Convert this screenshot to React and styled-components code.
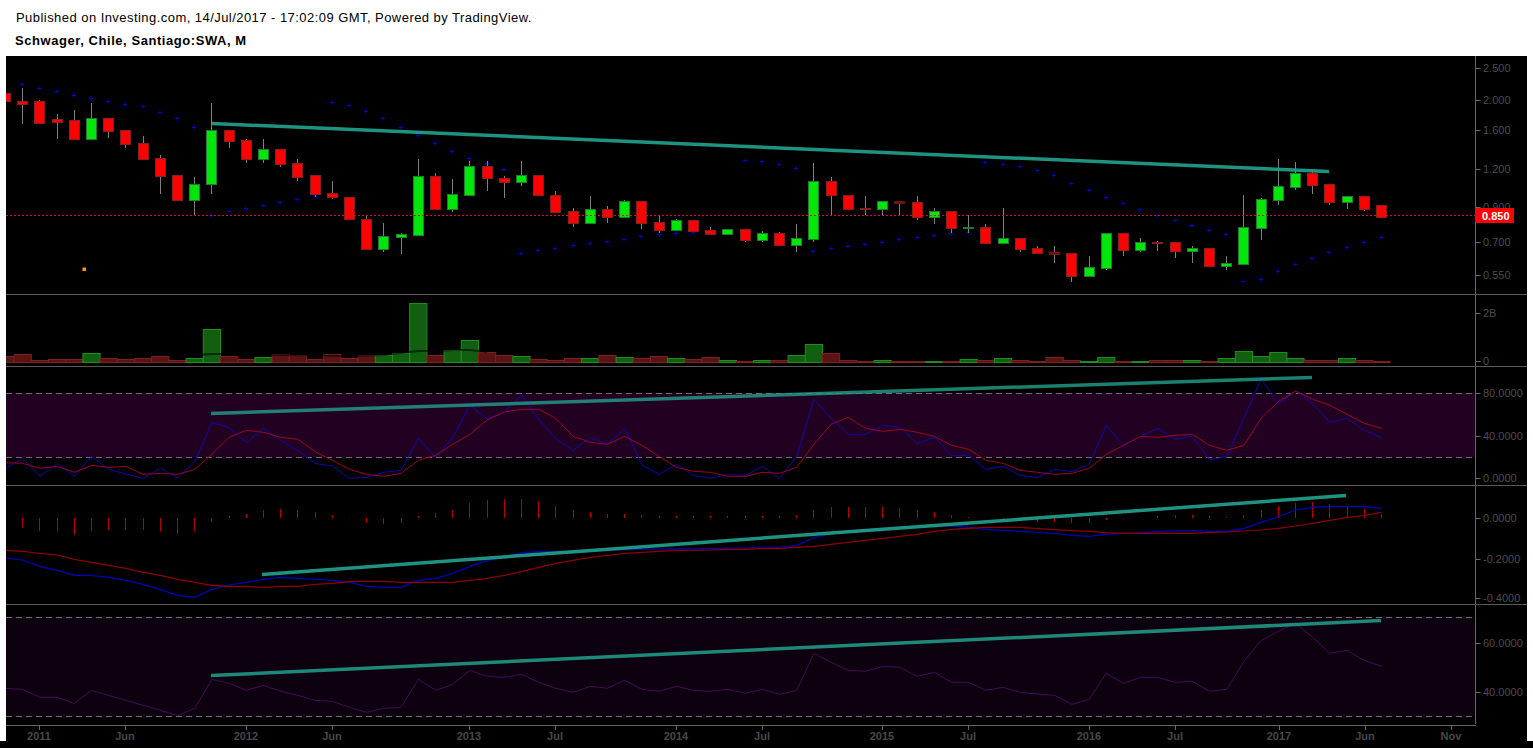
import React from 'react'
import styled, {createGlobalStyle} from 'styled-components'

const GlobalStyle = createGlobalStyle`
  html, body {
    margin: 0;
    padding: 0;
    background: #000;
    font-family: 'Liberation Sans', Arial, sans-serif;
  }
`

const barX = i => 5.5 + 17.2 * i
const snap = i => Math.floor(barX(i)) + 0.5
const AXIS_X = 1475.5

// g/r, body top, body bottom, wick top, wick bottom (page pixels)
const CANDLES = [
  ['r',93,101,93,101],['r',101,104,88,124],['r',101,123,100,124],['r',119,122,114,139],
  ['r',120,139,110,140],['g',118,139,103,139],['r',118,131,118,138],['r',130,144,130,148],
  ['r',143,159,136,159],['r',158,176,155,194],['r',175,200,175,201],['g',184,200,177,215],
  ['g',130,184,103,194],['r',130,141,130,148],['r',140,159,139,163],['g',149,159,139,163],
  ['r',149,164,149,167],['r',163,177,159,181],['r',175,194,175,197],['r',193,197,181,199],
  ['r',197,219,197,219],['r',219,249,216,250],['g',236,249,223,252],['g',234,237,233,254],
  ['g',176,235,159,235],['r',176,209,173,209],['g',194,209,179,212],['g',166,195,161,196],
  ['r',166,178,161,191],['r',178,182,176,198],['g',175,182,161,186],['r',175,195,175,196],
  ['r',195,212,191,212],['r',211,223,208,227],['g',209,223,196,223],['r',209,217,206,223],
  ['g',201,217,200,217],['r',201,223,201,229],['r',222,230,215,233],['g',220,230,219,230],
  ['r',220,231,220,231],['r',230,234,227,234],['g',229,234,229,234],['r',229,240,229,242],
  ['g',233,240,231,242],['r',233,245,232,245],['g',238,245,224,252],['g',181,239,163,242],
  ['r',181,195,177,215],['r',195,209,195,209],['r',208,209,196,215],['g',201,209,201,215],
  ['d',201,203,201,215],['r',202,217,196,220],['g',211,217,208,224],['r',211,228,211,233],
  ['g',227,228,215,233],['r',227,243,224,243],['g',238,243,208,243],['r',238,249,238,252],
  ['r',248,253,246,253],['d',252,254,246,263],['r',253,276,253,282],['g',267,276,256,276],
  ['g',233,268,233,270],['r',233,250,233,256],['g',242,250,238,252],['r',242,243,241,251],
  ['r',242,251,242,258],['g',248,251,246,263],['r',248,266,248,266],['g',263,266,256,270],
  ['g',227,264,195,264],['g',199,228,198,240],['g',186,200,159,205],['g',173,187,162,190],
  ['r',173,185,169,194],['r',184,202,184,205],['g',196,202,196,209],['r',196,209,196,211],
  ['r',205,217,205,217],
]

// parabolic SAR: bar index, y
const SAR = [
  [1,84],[2,88],[3,91],[4,95],[5,98],[6,101],[7,104],[8,106],[9,112],[10,118],[11,127],
  [12,215],[13,211],[14,208],[15,205],[16,202],[17,199],[18,196],
  [19,102],[20,105],[21,111],[22,118],[23,127],[24,135],[25,143],[26,151],[27,158],[28,163],[29,169],
  [30,253],[31,250],[32,248],[33,245],[34,243],[35,241],[36,239],[37,236],[38,234],[39,233],[40,232],
  [43,160],[44,161],[45,164],[46,168],
  [47,251],[48,248],[49,246],[50,244],[51,242],[52,239],[53,237],[54,235],[55,233],[56,232],
  [57,162],[58,164],[59,166],[60,170],[61,175],[62,183],[63,190],[64,197],[65,203],[66,209],
  [67,215],[68,220],[69,225],[70,230],[71,234],
  [72,281],[73,279],[74,271],[75,264],[76,258],[77,252],[78,247],[79,242],[80,237],
]

// volume bars: g/r, height in px above the zero line at y=362
const VOLUME = [
  ['r',6],['r',8],['r',2],['r',3],['r',3],['g',9],['r',4],['r',3],['r',4],['r',6],['r',2],['g',4],
  ['g',33],['r',6],['r',3],['g',5],['r',8],['r',7],['r',3],['r',8],['r',4],['r',7],['g',7],['g',9],
  ['g',59],['r',7],['g',12],['g',22],['r',10],['r',7],['g',6],['r',3],['r',2],['r',4],['g',4],['r',7],
  ['g',5],['r',4],['r',6],['g',4],['r',3],['r',5],['g',2],['r',1],['g',2],['r',2],['g',7],['g',18],
  ['r',9],['r',2],['r',1],['g',2],['r',1],['r',1],['g',1],['r',1],['g',3],['r',2],['g',4],['r',2],
  ['r',1],['r',5],['r',2],['g',1],['g',5],['r',1],['g',1],['r',2],['r',2],['g',2],['r',1],['g',4],
  ['g',11],['g',6],['g',10],['g',4],['r',2],['r',2],['g',4],['r',2],['r',1],
]

// the lines below are read as y offsets, 3 units to a pixel, from the top of the pane at y=365
const STOCH_BLUE = [310,280,333,296,333,275,313,327,340,310,338,291,172,188,232,190,226,257,295,303,340,337,322,316,220,277,218,120,162,141,90,162,222,256,217,238,190,300,328,298,331,340,329,331,304,340,275,102,160,208,208,181,187,236,217,271,271,313,304,331,338,313,320,298,181,242,214,190,224,214,284,275,160,42,118,78,115,172,160,196,218]
const STOCH_RED = [293,295,310,304,322,301,307,304,328,325,328,313,268,217,196,202,217,223,260,286,313,328,334,325,286,271,238,208,165,141,133,133,160,214,232,238,214,241,274,307,319,322,334,334,322,325,307,238,178,157,190,199,193,202,214,241,253,286,295,316,322,328,325,310,268,241,214,217,211,208,241,256,241,160,110,78,103,121,148,175,190]
const MACD_BLUE = [579,585,604,616,631,631,637,646,658,673,691,697,673,660,652,643,637,640,643,646,652,664,667,667,646,640,625,604,586,577,563,560,560,560,558,556,553,553,552,551,551,551,549,549,546,546,541,519,505,499,496,491,486,486,483,483,487,493,496,499,502,505,511,514,508,505,503,499,497,497,499,499,490,472,456,435,427,424,424,424,431]
const MACD_RED = [556,559,565,570,583,592,601,610,622,631,643,652,661,664,664,667,664,664,658,655,650,649,649,652,652,652,652,646,640,631,620,607,595,586,577,571,565,562,559,556,556,555,553,553,550,550,547,544,538,532,526,520,514,508,499,493,490,487,487,487,491,494,497,499,503,505,505,505,505,505,502,501,498,495,490,483,475,466,457,452,442]
const MACD_HIST = [459,487,498,500,510,498,495,495,495,500,507,500,470,453,447,435,432,435,441,450,460,474,477,474,453,444,435,414,405,402,402,408,423,435,441,447,447,450,453,453,453,453,453,453,453,453,450,435,426,426,426,426,429,435,441,450,456,458,468,468,470,471,474,474,465,461,458,453,450,450,453,456,450,435,423,414,411,417,423,432,447]
const RSI = [970,973,997,997,1015,976,991,1006,1021,1036,1052,1030,943,955,976,961,979,991,1006,1009,1027,1042,1030,1027,943,976,958,916,934,937,928,952,970,982,964,970,946,973,979,964,976,979,973,985,973,988,976,865,892,916,919,904,907,934,922,952,952,976,967,982,987,991,1018,1003,925,955,937,937,952,949,979,973,889,827,799,775,817,865,856,886,904]

const offsetY = v => 365 + v / 3
const linePoints = values => values.map((v, i) => `${barX(i)},${offsetY(v)}`).join(' ')

const Page = styled.div`
  width: 1533px;
  height: 748px;
  background: #000;
  overflow: hidden;
`

const Sheet = styled.div`
  background: #fff;
  padding: 0 6px;
  height: 741px;
  box-sizing: border-box;
`

const Header = styled.header`
  height: 56px;
  padding: 10px 0 0 10px;
  box-sizing: border-box;
  color: #000;
`

const Published = styled.div`
  font-size: 13px;
  line-height: 16px;
  letter-spacing: 0.45px;
`

const Title = styled.div`
  margin-top: 7px;
  margin-left: -1px;
  font-size: 13px;
  line-height: 16px;
  font-weight: 700;
  letter-spacing: 0.56px;
`

const Chart = styled.div`
  width: 1521px;
  height: 685px;
  background: #000;
`

const Pane = styled.div`
  height: ${p => p.$height}px;
  box-sizing: border-box;
  border-bottom: 1px solid ${p => (p.$plain ? 'transparent' : '#595959')};
  overflow: hidden;

  svg {
    display: block;
  }
`

const AxisText = styled.text`
  font-family: 'Liberation Sans', Arial, sans-serif;
  font-size: 11px;
  fill: #4c4c4c;
`

const TimeText = styled(AxisText)`
  text-anchor: middle;
  font-weight: 700;
  fill: #484848;
`

const LastPriceText = styled(AxisText)`
  font-weight: 700;
  fill: #fff;
`

const Rule = styled.line`
  stroke: #666;
  stroke-width: 1;
`

const Level = styled.line`
  stroke: #77687a;
  stroke-width: 1;
  stroke-dasharray: 6 4;
`

const Trace = styled.polyline`
  fill: none;
  stroke: ${p => p.$color};
  stroke-width: ${p => p.$width || 1};
`

const Wick = styled.line`
  stroke: #808080;
  stroke-width: 1;
`

const COLORS = {
  r: {fill: '#ff0000', edge: '#8a1d1d'},
  g: {fill: '#00e60a', edge: '#1c7d2a'},
  d: {fill: '#6e1414', edge: '#6e1414'},
}

const Body = styled.rect`
  fill: ${p => COLORS[p.$kind].fill};
  stroke: ${p => COLORS[p.$kind].edge};
  stroke-width: 1;
`

const VOL_COLORS = {
  r: {fill: '#5a1414', edge: '#7e2020'},
  g: {fill: '#125f12', edge: '#1e8f1e'},
}

const VolBar = styled.rect`
  fill: ${p => VOL_COLORS[p.$kind].fill};
  stroke: ${p => VOL_COLORS[p.$kind].edge};
  stroke-width: 1;
`

const TrendLine = styled.line`
  stroke: #22a08c;
  stroke-width: 3.5;
  opacity: ${p => p.$opacity || 0.92};
`

const Tick = ({y}) => <Rule x1={AXIS_X} x2={AXIS_X + 5} y1={y} y2={y} />

const AxisLabels = ({labels}) => (
  <>
    <Rule x1={AXIS_X} x2={AXIS_X} y1={0} y2={800} />
    {labels.map(([text, y]) => (
      <React.Fragment key={text + y}>
        <Tick y={y + 0.5} />
        <AxisText x={1483} y={y + 4}>{text}</AxisText>
      </React.Fragment>
    ))}
  </>
)

const PaneSvg = ({top, height, children}) => (
  <svg width={1521} height={height} viewBox={`6 ${top} 1521 ${height}`}>{children}</svg>
)

const Candles = () => CANDLES.map(([kind, bodyTop, bodyBottom, wickTop, wickBottom], i) => {
  const x = snap(i)
  return (
    <g key={i}>
      <Wick x1={x} x2={x} y1={wickTop} y2={wickBottom} />
      <Body $kind={kind} x={x - 5} y={bodyTop + 0.5} width={10} height={Math.max(bodyBottom - bodyTop, 1)} />
    </g>
  )
})

const PricePane = () => (
  <Pane $height={239}>
    <PaneSvg top={56} height={238}>
      <AxisLabels labels={[
        ['2.500', 68], ['2.000', 100], ['1.600', 130], ['1.200', 169], ['0.900', 207], ['0.700', 242], ['0.550', 275],
      ]} />
      {SAR.map(([i, y]) => (
        <path key={i} d={`M${snap(i) - 2.5} ${y + 0.5}h4M${snap(i) - 0.5} ${y - 1.5}v4`} stroke="#0000d0" strokeWidth="1" fill="none" />
      ))}
      <Candles />
      <TrendLine x1={212} y1={123.5} x2={1329} y2={171.5} />
      <line x1={6} x2={AXIS_X} y1={215.5} y2={215.5} stroke="#e01010" strokeDasharray="2 2" />
      <rect x={82.5} y={267.5} width={3.5} height={3.5} fill="#f59a00" />
      <rect x={1475} y={208} width={39} height={15} fill="#ff0000" />
      <LastPriceText x={1482} y={220}>0.850</LastPriceText>
    </PaneSvg>
  </Pane>
)

const VolumePane = () => (
  <Pane $height={72}>
    <PaneSvg top={295} height={71}>
      <AxisLabels labels={[['2B', 313], ['0', 361]]} />
      {VOLUME.map(([kind, h], i) => (
        <VolBar key={i} $kind={kind} x={barX(i) - 8.6} y={362.5 - h} width={17.2} height={h} />
      ))}
      <Trace
        $color="rgba(0,0,0,0.55)"
        $width={2}
        points={[[10, 355], [11, 355], [12, 354], [13, 354], [20, 356], [22, 355], [23, 353], [24, 351], [25, 351], [26, 350], [27, 350], [28, 352]]
          .map(([i, y]) => `${barX(i)},${y}`).join(' ')}
      />
    </PaneSvg>
  </Pane>
)

const StochPane = () => (
  <Pane $height={119}>
    <PaneSvg top={367} height={118}>
      <rect x={6} y={393} width={1469.5} height={64} fill="#220022" />
      <Level x1={6} x2={AXIS_X} y1={393.5} y2={393.5} />
      <Level x1={6} x2={AXIS_X} y1={457.5} y2={457.5} />
      <AxisLabels labels={[['80.0000', 393], ['40.0000', 436], ['0.0000', 478]]} />
      <Trace $color="#1400b4" points={linePoints(STOCH_BLUE)} />
      <Trace $color="#a00022" points={linePoints(STOCH_RED)} />
      <TrendLine x1={211} y1={413.5} x2={1312} y2={377.5} $opacity={0.8} />
    </PaneSvg>
  </Pane>
)

const MacdPane = () => (
  <Pane $height={119}>
    <PaneSvg top={486} height={118}>
      <AxisLabels labels={[['0.0000', 518], ['-0.2000', 559], ['-0.4000', 598]]} />
      {MACD_HIST.map((v, i) => {
        const x = snap(i)
        return <line key={i} x1={x} x2={x} y1={518} y2={offsetY(v)} stroke="#b80000" />
      })}
      <Trace $color="#0000c0" $width={1.2} points={linePoints(MACD_BLUE)} />
      <Trace $color="#900000" $width={1.2} points={linePoints(MACD_RED)} />
      <TrendLine x1={262} y1={574.5} x2={1346} y2={495.5} />
    </PaneSvg>
  </Pane>
)

const RsiPane = () => (
  <Pane $height={120} $plain>
    <PaneSvg top={605} height={119}>
      <rect x={6} y={617} width={1469.5} height={99} fill="#0d000f" />
      <Level x1={6} x2={AXIS_X} y1={617.5} y2={617.5} />
      <Level x1={6} x2={AXIS_X} y1={716.5} y2={716.5} />
      <AxisLabels labels={[['60.0000', 643], ['40.0000', 692]]} />
      <Trace $color="#48085c" points={linePoints(RSI)} />
      <TrendLine x1={211} y1={675.5} x2={1381} y2={620.5} $opacity={0.85} />
    </PaneSvg>
  </Pane>
)

const TIME_LABELS = [
  ['2011', 39], ['Jun', 125], ['2012', 246], ['Jun', 332], ['2013', 469], ['Jul', 555], ['2014', 676], ['Jul', 762],
  ['2015', 882], ['Jul', 968], ['2016', 1089], ['Jul', 1175], ['2017', 1279], ['Jun', 1365], ['Nov', 1451],
]

const TimeAxis = () => (
  <Pane $height={17} $plain>
    <svg width={1521} height={16} viewBox="6 724 1521 16">
      <Rule x1={6} x2={AXIS_X + 0.5} y1={724.5} y2={724.5} />
      {TIME_LABELS.map(([text, x]) => (
        <React.Fragment key={text + x}>
          <Rule x1={x + 0.5} x2={x + 0.5} y1={725} y2={729} />
          <TimeText x={x} y={739}>{text}</TimeText>
        </React.Fragment>
      ))}
    </svg>
  </Pane>
)

const App = () => (
  <Page>
    <GlobalStyle />
    <Sheet>
      <Header>
        <Published>Published on Investing.com, 14/Jul/2017 - 17:02:09 GMT, Powered by TradingView.</Published>
        <Title>Schwager, Chile, Santiago:SWA, M</Title>
      </Header>
      <Chart>
        <PricePane />
        <VolumePane />
        <StochPane />
        <MacdPane />
        <RsiPane />
        <TimeAxis />
      </Chart>
    </Sheet>
  </Page>
)

export default App
